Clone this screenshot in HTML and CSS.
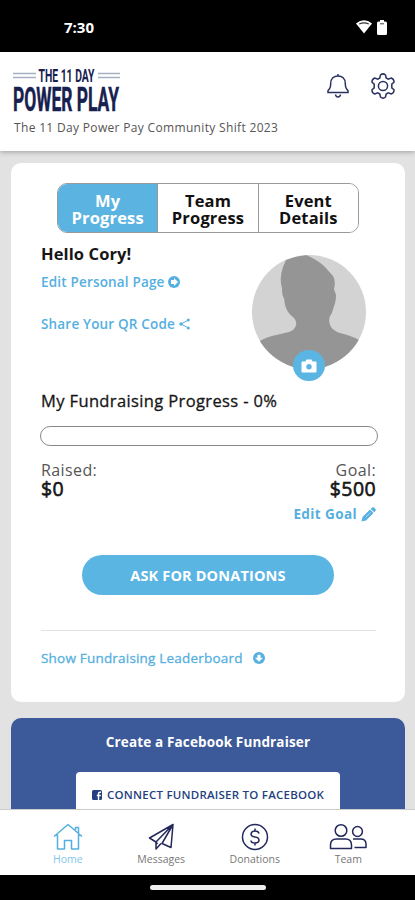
FILE: index.html
```html
<!DOCTYPE html>
<html lang="en">
<head>
    <meta charset="UTF-8">
    <meta name="viewport" content="width=device-width, initial-scale=1.0">
    <title>The 11 Day Power Play</title>
    <link rel="stylesheet" href="styles.css">
</head>
<body>
    <svg width="0" height="0" class="defs">
        <symbol id="arrow-circle" viewBox="0 0 12 12">
            <circle cx="6" cy="6" r="6" fill="currentColor"/>
            <path d="M6 2 10 6 6 10V8H3V4h3z" fill="#fff"/>
        </symbol>
        <symbol id="arrow-circle-down" viewBox="0 0 12 12">
            <circle cx="6" cy="6" r="6" fill="currentColor"/>
            <path d="M9.500 6 6 9.500 2.500 6H4.700V3h2.600v3z" fill="#fff" stroke="#fff" stroke-width=".5"/>
        </symbol>
    </svg>

    <div class="status-bar">
        <span class="time">7:30</span>
        <div class="status-icons">
            <svg width="16" height="14" viewBox="0 0 16 14"><path d="M0 3.5Q8-3 16 3.5L8 13.5z" fill="#fff"/><path d="M3.2 4Q8 1.8 12.8 4" fill="none" stroke="#333" stroke-width="1.2"/></svg>
            <svg width="10" height="15" viewBox="0 0 10 15"><path d="M3 0h4v1.5h1.5Q10 1.500 10 3v10.500Q10 15 8.500 15h-7Q0 15 0 13.500V3Q0 1.500 1.500 1.500H3z" fill="#fff"/><path d="M3 3.800h4" stroke="#444"/></svg>
        </div>
    </div>

    <header class="header">
        <div class="header-top">
            <svg class="logo" width="108" height="44" viewBox="0 0 108 44">
                <path d="M0 5.500h23M0 9.500h23M85 5.500h22M85 9.500h22" stroke="#a5b0c2" stroke-width="1.300"/>
                <text x="25.500" y="13.500" font-size="17.500" textLength="56" lengthAdjust="spacingAndGlyphs">THE 11 DAY</text>
                <text class="logo-name" x="0" y="42.500" font-size="33" textLength="106" lengthAdjust="spacingAndGlyphs">POWER PLAY</text>
            </svg>
            <div class="header-icons">
                <svg width="24" height="28" viewBox="0 0 24 28">
                    <path d="M12 2v2M2 20.500v-2C4 17 4.700 15 4.700 11.500 4.700 6.500 8 4 12 4s7.300 2.500 7.300 7.500c0 3.500.700 5.500 2.700 7v2z"/>
                    <path d="M9.500 22.500c.300 3.200 4.700 3.200 5 0"/>
                </svg>
                <svg width="28" height="28" viewBox="0 0 28 28">
                    <path d="M11.500 3Q14 .800 16.500 3l.700 3 2 1.100 3-1.100q3 1 2.800 4.200l-2.200 2v3.600l2.200 2q.200 3.200-2.800 4.200l-3-1.100-2 1.100-.700 3Q14 27.200 11.500 25l-.700-3-2-1.100-3 1.100Q2.800 21 3 17.800l2.200-2v-3.600l-2.200-2Q2.800 7 5.800 6l3 1.100 2-1.100z"/>
                    <circle cx="14" cy="14" r="4.600"/>
                </svg>
            </div>
        </div>
        <div class="event-name">The 11 Day Power Pay Community Shift 2023</div>
    </header>

    <main class="content">
        <section class="card">
            <div class="tabs">
                <button class="tab active">My<br>Progress</button>
                <button class="tab">Team<br>Progress</button>
                <button class="tab">Event<br>Details</button>
            </div>

            <div class="profile">
                <div class="profile-text">
                    <h1 class="hello">Hello Cory!</h1>
                    <a class="link edit-page"><span>Edit Personal Page</span><svg width="12" height="12"><use href="#arrow-circle"/></svg></a>
                    <a class="link share"><span>Share Your QR Code</span><svg width="11" height="12" viewBox="0 0 11 12"><path d="M9.500 2 2 6l7.500 4" fill="none" stroke="currentColor"/><g fill="currentColor"><circle cx="9.300" cy="2" r="1.500"/><circle cx="2" cy="6" r="1.700"/><circle cx="9.300" cy="10" r="1.500"/></g></svg></a>
                </div>
                <div class="avatar">
                    <svg width="114" height="114" viewBox="0 0 114 114">
                        <clipPath id="round"><circle cx="57" cy="57" r="57"/></clipPath>
                        <g clip-path="url(#round)">
                            <path d="M0 0h114v114H0z" fill="#d3d3d3"/>
                            <path d="M0 91Q9 84 20 81L37 77Q43 75 44 70 45 66 42 63 35 58 33 50L32 43Q30 41 30 33 27 23 31 12L34 5 43 2 54 0Q64 4 72 11L81 21Q84 26 82 34L84 40Q84 47 82 51 80 59 78 61 76 67 79 72 82 76 88 78 103 81 114 90V114H0z" fill="#959595"/>
                        </g>
                    </svg>
                    <span class="camera">
                        <svg width="16" height="14" viewBox="0 0 16 14"><path d="M1.500 2.500H4.500L5.500.500h5l1 2h3q1 0 1 1v9q0 1-1 1h-13q-1 0-1-1v-9q0-1 1-1z" fill="#fff"/><circle cx="8" cy="7.700" r="2.700" fill="#5bb5e3"/></svg>
                    </span>
                </div>
            </div>

            <h2 class="progress-title">My Fundraising Progress - 0%</h2>
            <div class="progress-bar"></div>

            <div class="amounts">
                <div>
                    <div class="label">Raised:</div>
                    <div class="amount">$0</div>
                </div>
                <div class="goal">
                    <div class="label">Goal:</div>
                    <div class="amount">$500</div>
                </div>
            </div>
            <a class="link edit-goal"><span>Edit Goal</span><svg width="15" height="15" viewBox="0 0 15 15" fill="currentColor"><path d="M.500 14.500 1.500 10 9 2.500 12.500 6 5 13.500zM9.700 1.900l1.300-1.300q1-.800 2 0l1.400 1.500q.800 1 0 1.900l-1.200 1.300z"/><path d="M4.500 10.500 9.500 5.500" stroke="#fff" stroke-width=".5"/></svg></a>

            <button class="ask">ASK FOR DONATIONS</button>

            <a class="link leaderboard"><span>Show Fundraising Leaderboard</span><svg width="12" height="12"><use href="#arrow-circle-down"/></svg></a>
        </section>

        <section class="facebook">
            <h2 class="facebook-title">Create a Facebook Fundraiser</h2>
            <button class="connect">
                <svg width="10" height="10" viewBox="0 0 10 10"><rect width="10" height="10" rx="1.500" fill="#263f80"/><path d="M6.500 10V3.800q0-1.500 1.500-1.500h1M4.800 5.500h4" fill="none" stroke="#fff" stroke-width="1.400"/></svg>
                <span>CONNECT FUNDRAISER TO FACEBOOK</span>
            </button>
        </section>
    </main>

    <nav class="nav">
        <a class="nav-item current">
            <svg width="30" height="28" viewBox="0 0 30 28"><path d="M1 13.500 15 1.500l14 12M4.500 11.500V26h7v-8.500h7V26h7V11.500M22.500 7V4.500h3v5.500"/></svg>
            <span>Home</span>
        </a>
        <a class="nav-item">
            <svg width="28" height="28" viewBox="0 0 28 28"><path d="M26 1.500 2.500 15l6.500 4L26 1.500 24 24.500l-9-4zM9 19v7l5-5.500M9 19l1.500 2"/></svg>
            <span>Messages</span>
        </a>
        <a class="nav-item">
            <svg width="28" height="28" viewBox="0 0 28 28"><circle cx="14" cy="14" r="12.500"/><path d="M18 10.500Q17.500 8 14 8t-4 3q0 2.300 4 3t4 3q0 3-4 3t-4-2.500M14 5.500V8M14 20v2.500"/></svg>
            <span>Donations</span>
        </a>
        <a class="nav-item">
            <svg width="38" height="28" viewBox="0 0 38 28"><circle cx="12" cy="7.500" r="5.800"/><path d="M1.500 25.500V22q0-6 6-6h9q6 0 6 6v3.500z"/><circle cx="28.500" cy="8.500" r="4.900"/><path d="M24 16h7.500q5.500 0 5.500 5v3.500H25.500"/></svg>
            <span>Team</span>
        </a>
    </nav>
    <div class="home-bar"><span class="home-indicator"></span></div>
</body>
</html>
```

FILE: styles.css
```css
* {
    box-sizing: border-box;
}

body {
    margin: 0;
    height: 900px;
    display: flex;
    flex-direction: column;
    overflow: hidden;
    background-color: #e2e2e2;
    color: #161616;
    font-family: 'Open Sans', sans-serif;
}

h1, h2 {
    margin: 0;
}

button {
    border: 0;
    padding: 0;
    font-family: inherit;
}

svg {
    display: block;
    flex-shrink: 0;
}

.defs {
    position: absolute;
}

.status-bar {
    flex: 0 0 52px;
    display: flex;
    justify-content: space-between;
    padding: 17px 28px 0 64px;
    background-color: #000;
    color: #fff;
}
.time {
    font-size: 15px;
    line-height: 21px;
    font-weight: 700;
}
.status-icons {
    display: flex;
    gap: 5px;
    padding-top: 3px;
}

.header {
    position: relative;
    flex: 0 0 99px;
    padding: 16px 18px 0 13px;
    background-color: #fff;
    box-shadow: 0 1px 5px rgba(0, 0, 0, 0.3);
}
.header-top {
    display: flex;
    justify-content: space-between;
    height: 50px;
}
.logo {
    overflow: visible;
}
.logo text {
    fill: #17204f;
    font-family: 'Roboto', sans-serif;
    font-weight: 700;
}
.logo .logo-name {
    stroke: #17204f;
    stroke-width: 0.5;
}
.header-icons {
    display: flex;
    gap: 19px;
    padding-top: 4px;
    fill: none;
    stroke: #2b3160;
    stroke-width: 1.5;
}
.event-name {
    padding-left: 1px;
    font-size: 12px;
    line-height: 20px;
    letter-spacing: 0.33px;
    color: #555;
}

.content {
    flex: 1;
    min-height: 0;
    overflow: hidden;
    padding: 12px 10px 0 11px;
}

.card {
    height: 539px;
    padding: 20px 29px 0 30px;
    background-color: #fff;
    border-radius: 10px;
}

.tabs {
    display: flex;
    width: 302px;
    height: 50px;
    margin-left: 16px;
    border: 1px solid #999;
    border-radius: 10px;
    overflow: hidden;
}
.tab {
    flex: 1;
    background-color: #fff;
    color: #111;
    font-size: 16.5px;
    font-weight: 700;
    line-height: 17px;
    letter-spacing: 0.15px;
    padding-top: 2px;
}
.tab + .tab {
    border-left: 1px solid #999;
}
.tab.active {
    background-color: #5bb3e1;
    color: #fff;
}

.profile {
    display: flex;
    justify-content: space-between;
    height: 156px;
    padding-right: 10px;
}
.hello {
    margin-top: 9px;
    font-size: 16.5px;
    line-height: 24px;
    font-weight: 700;
    letter-spacing: 0.1px;
}
.link {
    display: flex;
    align-items: center;
    color: #55afe0;
    font-size: 13.5px;
    font-weight: 600;
    line-height: 20px;
    letter-spacing: 0.18px;
}
.edit-page {
    gap: 3px;
    margin-top: 6px;
}
.share {
    gap: 4px;
    margin-top: 22px;
}
.avatar {
    position: relative;
    width: 114px;
    margin-top: 22px;
}
.camera {
    position: absolute;
    top: 95px;
    left: 41px;
    width: 32px;
    height: 31px;
    display: flex;
    align-items: center;
    justify-content: center;
    border-radius: 50%;
    background-color: #5bb5e3;
}

.progress-title {
    font-size: 16.5px;
    font-weight: 400;
    line-height: 24px;
    letter-spacing: 0.37px;
    -webkit-text-stroke: 0.3px #161616;
}
.progress-bar {
    height: 20px;
    margin: 13px -2px 0 -1px;
    border: 1px solid #888;
    border-radius: 10px;
}

.amounts {
    display: flex;
    justify-content: space-between;
    margin-top: 14px;
}
.goal {
    text-align: right;
}
.label {
    font-size: 16px;
    line-height: 20px;
    letter-spacing: 0.4px;
    color: #555;
}
.amount {
    font-size: 19.5px;
    line-height: 18px;
    font-weight: 400;
    letter-spacing: 0.4px;
    -webkit-text-stroke: 0.6px #161616;
}
.edit-goal {
    justify-content: flex-end;
    gap: 4px;
    margin-top: 6px;
    font-weight: 700;
    letter-spacing: 0.4px;
}

.ask {
    display: block;
    width: 252px;
    height: 40px;
    margin: 31px 0 0 41px;
    border-radius: 20px;
    background-color: #5bb5e3;
    color: #fff;
    font-size: 14.5px;
    font-weight: 700;
    letter-spacing: 0.15px;
}

.leaderboard {
    gap: 10px;
    margin-top: 35px;
    padding-top: 17px;
    border-top: 1px solid #e3e3e3;
    font-weight: 400;
    letter-spacing: 0.2px;
    -webkit-text-stroke: 0.3px #55afe0;
}

.facebook {
    height: 160px;
    margin-top: 16px;
    padding-top: 14px;
    border-radius: 10px;
    background-color: #3c5a99;
    text-align: center;
}
.facebook-title {
    color: #fff;
    font-size: 13.5px;
    font-weight: 700;
    line-height: 20px;
    letter-spacing: 0.14px;
}
.connect {
    display: flex;
    align-items: center;
    gap: 5px;
    width: 264px;
    height: 45px;
    margin: 20px 0 0 65px;
    padding-left: 16px;
    border-radius: 4px;
    background-color: #fff;
    color: #263f80;
    font-size: 11.5px;
    font-weight: 600;
    letter-spacing: 0.23px;
    white-space: nowrap;
}

.nav {
    position: relative;
    flex: 0 0 66px;
    display: flex;
    padding: 0 20px 0 21px;
    border-top: 1px solid #ccc;
    background-color: #fff;
}
.nav-item {
    flex: 1;
    display: flex;
    flex-direction: column;
    align-items: center;
    padding-top: 13px;
    color: #777;
    font-size: 10.5px;
    line-height: 16px;
}
.nav-item svg {
    fill: none;
    stroke: #23285c;
    stroke-width: 1.5;
    stroke-linejoin: round;
}
.nav-item.current {
    color: #83c5ec;
}
.nav-item.current svg {
    stroke: #55afe0;
}

.home-bar {
    flex: 0 0 25px;
    display: flex;
    justify-content: center;
    padding-top: 10px;
    background-color: #000;
}
.home-indicator {
    width: 116px;
    height: 5px;
    border-radius: 3px;
    background-color: #eee;
}
```
